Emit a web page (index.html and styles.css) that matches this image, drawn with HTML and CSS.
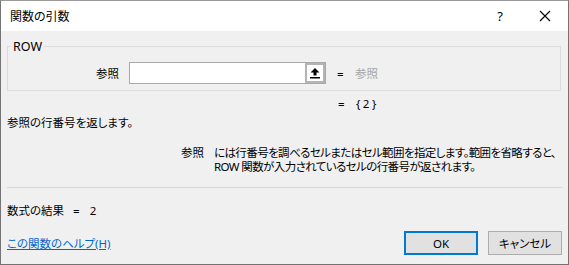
FILE: index.html
```html
<!DOCTYPE html>
<html lang="ja">
  <head>
    <meta charset="UTF-8" />
    <meta name="viewport" content="width=device-width, initial-scale=1.0" />
    <title>関数の引数</title>
    <link rel="stylesheet" href="styles.css">
  </head>
  <body>
    <div class="dialog">
      <div class="titlebar">
        <span class="title">関数の引数</span>
        <span class="tb-btn help">?</span>
        <span class="tb-btn close">
          <svg width="12" height="12" viewBox="0 0 12 12">
            <path d="M1 1 L11 11 M11 1 L1 11" stroke="#000" stroke-width="1.1" fill="none" />
          </svg>
        </span>
      </div>

      <div class="content">
        <fieldset class="group">
          <legend>ROW</legend>
          <div class="arg-row">
            <label class="arg-label">参照</label>
            <div class="ref-box">
              <span class="ref-text"></span>
              <span class="pick">
                <span class="pick-inner">
                  <svg width="16" height="16" viewBox="0 0 16 16">
                    <path d="M8 3 L12.5 7.5 L9.5 7.5 L9.5 10.5 L6.5 10.5 L6.5 7.5 L3.5 7.5 Z" fill="#000" />
                    <rect x="3" y="12" width="10" height="1.5" fill="#000" />
                  </svg>
                </span>
              </span>
            </div>
            <span class="eq">=</span>
            <span class="arg-hint">参照</span>
          </div>
        </fieldset>

        <div class="value-row">
          <span class="eq">=</span>
          <span class="value">{2}</span>
        </div>

        <p class="summary">参照の行番号を返します。</p>

        <div class="desc">
          <span class="desc-label">参照</span>
          <p class="desc-text">には行番号を調べるセルまたはセル範囲を指定します。範囲を省略すると、<br>ROW 関数が入力されているセルの行番号が返されます。</p>
        </div>

        <hr class="sep">

        <div class="result">数式の結果<span class="result-eq">=</span>2</div>

        <div class="footer">
          <a class="help-link" href="#">この関数のヘルプ(H)</a>
          <div class="buttons">
            <button class="btn primary">OK</button>
            <button class="btn">キャンセル</button>
          </div>
        </div>
      </div>
    </div>
  </body>
</html>
```

FILE: styles.css
```css
body {
  margin: 0;
  font-family: "Noto Sans", "Noto Sans CJK JP", sans-serif;
  font-size: 11.5px;
  font-feature-settings: "palt";
  color: #000;
}
.dialog {
  width: 569px;
  height: 265px;
  box-sizing: border-box;
  border: 1px solid #747474;
  border-top-color: #9a9a9a;
  background: #f0f0f0;
  display: flex;
  flex-direction: column;
}
.titlebar {
  height: 30px;
  background: #fff;
  display: flex;
  align-items: center;
}
.title {
  flex: 1;
  padding-left: 9px;
  font-size: 12px;
}
.tb-btn {
  height: 30px;
  display: flex;
  align-items: center;
  justify-content: center;
}
.help {
  width: 44px;
  font-size: 13px;
}
.close {
  width: 46px;
}
.content {
  flex: 1;
  padding: 8px 7px 0 6px;
  display: flex;
  flex-direction: column;
}
.group {
  margin: 0;
  padding: 8px 0 6px 0;
  border: 1px solid #dcdcdc;
  min-inline-size: 0;
}
.group legend {
  margin-left: 3px;
  padding: 0 2px;
  font-size: 12.5px;
  line-height: 15px;
}
.arg-row {
  display: flex;
  align-items: center;
  height: 22px;
}
.arg-label {
  width: 111px;
  text-align: right;
  margin-right: 10px;
}
.ref-box {
  width: 195px;
  height: 20px;
  border: 1px solid #a9a9a9;
  background: #fff;
  display: flex;
}
.ref-text {
  flex: 1;
}
.pick {
  width: 16px;
  height: 16px;
  padding: 2px;
  background: #b4b4b4;
}
.pick-inner {
  display: block;
  width: 16px;
  height: 16px;
  background: #fff;
}
.pick-inner svg {
  display: block;
}
.eq {
  width: 18px;
  margin-left: 11px;
}
.arg-hint {
  color: #a6a6a6;
}
.value-row {
  display: flex;
  margin-top: 5px;
  padding-left: 320px;
  line-height: 15px;
}
.value {
  letter-spacing: 2.5px;
}
.summary {
  margin: 4px 0 0 0;
  line-height: 15px;
}
.desc {
  display: flex;
  margin-top: 16px;
  padding-left: 174px;
  line-height: 14px;
}
.desc-label {
  width: 33px;
  flex-shrink: 0;
}
.desc-text {
  margin: 0;
  white-space: nowrap;
  letter-spacing: -0.6px;
}
.sep {
  margin: 13px -1px 0 0;
  border: 0;
  border-top: 1px solid #d7d7d7;
}
.result {
  margin-top: 15px;
  line-height: 15px;
}
.result-eq {
  margin: 0 10px 0 9px;
}
.footer {
  margin-top: 13px;
  margin-right: -1px;
  display: flex;
  align-items: center;
  justify-content: space-between;
}
.help-link {
  color: #0066cc;
  text-decoration: underline;
}
.buttons {
  display: flex;
  gap: 10px;
}
.btn {
  width: 74px;
  height: 24px;
  box-sizing: border-box;
  border: 1px solid #adadad;
  background: #e1e1e1;
  font-family: inherit;
  font-size: 11.5px;
  font-feature-settings: "palt";
  padding: 0;
  color: #000;
}
.btn.primary {
  border: 2px solid #0078d7;
}
```
